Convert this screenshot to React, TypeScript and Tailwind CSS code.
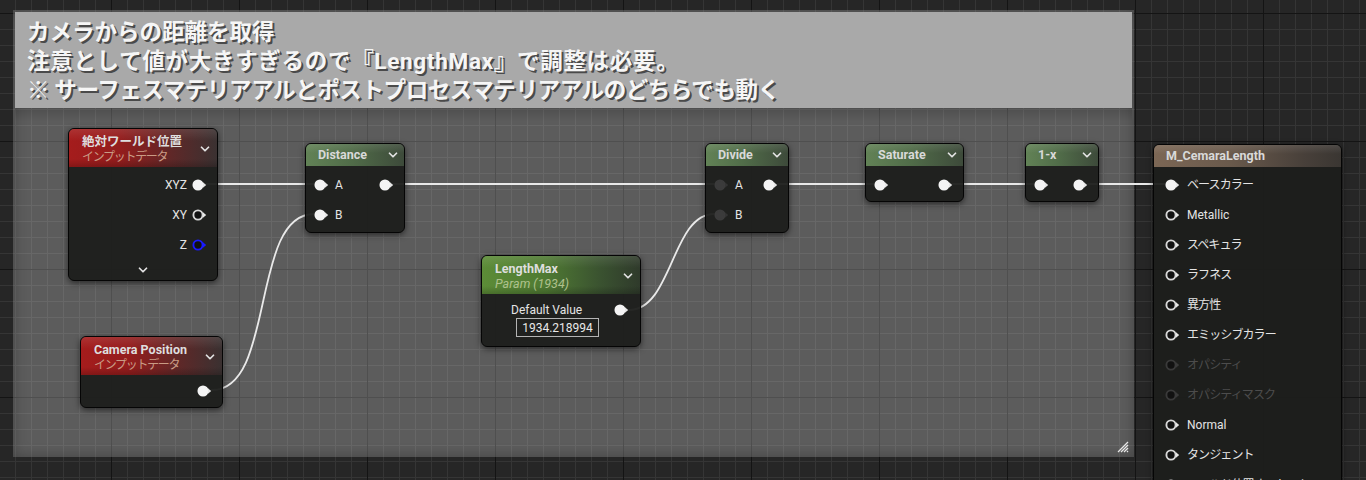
import React from 'react';
import { ChevronDown } from 'lucide-react';

type PinKind = 'filled' | 'ring' | 'dim' | 'blue' | 'ghost';

// Graph pin: a round socket with a little arrow on its right side
function Pin({ kind = 'filled' }: { kind?: PinKind }) {
  const fill = kind === 'filled' ? '#f4f4f4' : kind === 'dim' ? '#3b3b3b' : '#111111';
  const stroke =
    kind === 'filled' ? '#f4f4f4'
    : kind === 'blue' ? '#1a1aff'
    : kind === 'dim' ? '#3b3b3b'
    : kind === 'ghost' ? '#3a3a3a'
    : '#d8d8d8';
  const arrow =
    kind === 'blue' ? '#1a1aff'
    : kind === 'dim' ? '#333333'
    : kind === 'ghost' ? '#3a3a3a'
    : '#e6e6e6';
  return (
    <svg width="15" height="12" viewBox="0 0 15 12" className="shrink-0 block">
      <circle cx="6" cy="6" r="4.6" fill={fill} stroke={stroke} strokeWidth="1.9" />
      <path d="M11 3.3 L14.2 6 L11 8.7 Z" fill={arrow} />
    </svg>
  );
}

function Chevron() {
  return <ChevronDown size={14} strokeWidth={3} className="text-[#e2e2e2] shrink-0" />;
}

const RED = 'bg-[linear-gradient(90deg,#a51c1c_0%,#931d1d_35%,#5e2828_70%,#3a3131_100%)]';
const GREEN = 'bg-[linear-gradient(90deg,#628256_0%,#516d49_45%,#3d4a3a_100%)]';
const PARAM = 'bg-[linear-gradient(90deg,#5c8c37_0%,#4f7a33_40%,#3a5230_75%,#2f3a2b_100%)]';
const MATERIAL = 'bg-[linear-gradient(90deg,#7c6755_0%,#6a5a4c_40%,#48403a_80%,#3a3632_100%)]';

function Shell({ pos, children }: { pos: string; children: React.ReactNode }) {
  return (
    <div
      className={`absolute ${pos} rounded-[6px] border border-[#050505] bg-[#1c1d1b]/95 shadow-[0_2px_6px_rgba(0,0,0,0.55)] overflow-hidden`}
    >
      {children}
    </div>
  );
}

function ShortHeader({ tone, title, menu = true }: { tone: string; title: string; menu?: boolean }) {
  return (
    <div className={`relative h-[22px] ${tone} flex items-center justify-between pl-[12px] pr-[4px]`}>
      <div className="absolute inset-x-0 top-0 h-[9px] bg-gradient-to-b from-white/10 to-transparent" />
      <span className="relative text-[12.5px] font-bold leading-none text-[#d9d9d9]">{title}</span>
      {menu && <span className="relative"><Chevron /></span>}
    </div>
  );
}

function TallHeader({ tone, title, sub, subClass }: { tone: string; title: string; sub: string; subClass: string }) {
  return (
    <div className={`relative h-[38px] ${tone} flex items-center justify-between pl-[13px] pr-[5px]`}>
      <div className="absolute inset-x-0 top-0 h-[12px] bg-gradient-to-b from-white/10 to-transparent" />
      <div className="absolute inset-x-0 bottom-0 h-[8px] bg-gradient-to-t from-black/20 to-transparent" />
      <div className="relative flex flex-col pt-[2px]">
        <span className="text-[12.5px] font-bold leading-[15px] text-[#dedede]">{title}</span>
        <span className={`leading-[16px] ${subClass}`}>{sub}</span>
      </div>
      <span className="relative mt-[2px]"><Chevron /></span>
    </div>
  );
}

function GridBackdrop() {
  return (
    <svg className="absolute inset-0" width="1366" height="480">
      <defs>
        <pattern id="minor" x="15" y="13" width="16" height="16" patternUnits="userSpaceOnUse">
          <path d="M0 0.5 H16 M0.5 0 V16" stroke="#353535" strokeWidth="1" />
        </pattern>
        <pattern id="major" x="111" y="13" width="128" height="128" patternUnits="userSpaceOnUse">
          <path d="M0 0.5 H128 M0.5 0 V128" stroke="#141414" strokeWidth="1" />
        </pattern>
      </defs>
      <rect width="1366" height="480" fill="url(#minor)" />
      <rect width="1366" height="480" fill="url(#major)" />
    </svg>
  );
}

function Wires() {
  const c = '#e9e9e9';
  return (
    <svg className="absolute inset-0 pointer-events-none" width="1366" height="480">
      <g fill="none" stroke={c} strokeWidth="1.8" strokeLinecap="round">
        <path d="M206 184 H314" />
        <path d="M393 184 H714" />
        <path d="M778 184 H874" />
        <path d="M952 184 H1034" />
        <path d="M1088 184 H1165" />
        <path d="M212 390 C276 390 250 214 314 214" />
        <path d="M629 310 C672 310 672 214 714 214" />
      </g>
    </svg>
  );
}

function CommentBox() {
  return (
    <div className="absolute left-[13px] top-[10px] w-[1121px] h-[447px] bg-white/25 p-[2px] shadow-[inset_0_0_14px_rgba(0,0,0,0.28)]">
      <div className="h-[96px] bg-[#a9a9a9] pl-[12px] pt-[6px] text-[22.5px] font-bold leading-[29px] text-[#f6f6f6] [text-shadow:2px_2px_0_#4a4a4a]">
        <div>カメラからの距離を取得</div>
        <div className="tracking-[0.7px]">注意として値が大きすぎるので『LengthMax』で調整は必要。</div>
        <div className="tracking-[-0.4px]">※ サーフェスマテリアアルとポストプロセスマテリアアルのどちらでも動く</div>
      </div>
      <div className="h-[14px] bg-gradient-to-b from-black/15 to-transparent" />
      <svg className="absolute right-[5px] bottom-[4px]" width="12" height="12" viewBox="0 0 12 12">
        <g stroke="#e8e8e8" strokeWidth="1.2">
          <path d="M1 11 L11 1" />
          <path d="M4 11 L11 4" />
          <path d="M7 11 L11 7" />
          <path d="M10 11 L11 10" />
        </g>
      </svg>
    </div>
  );
}

const materialRows: { label: string; kind: PinKind; jp?: boolean }[] = [
  { label: 'ベースカラー', kind: 'filled', jp: true },
  { label: 'Metallic', kind: 'ring' },
  { label: 'スペキュラ', kind: 'ring', jp: true },
  { label: 'ラフネス', kind: 'ring', jp: true },
  { label: '異方性', kind: 'ring', jp: true },
  { label: 'エミッシブカラー', kind: 'ring', jp: true },
  { label: 'オパシティ', kind: 'ghost', jp: true },
  { label: 'オパシティマスク', kind: 'ghost', jp: true },
  { label: 'Normal', kind: 'ring' },
  { label: 'タンジェント', kind: 'ring', jp: true },
  { label: 'ワールド位置オフセット', kind: 'ring', jp: true },
];

const inputData = 'text-[12px] tracking-[-1.3px] text-[#c99b85]';

export default function App() {
  return (
    <div className="relative w-[1366px] h-[480px] overflow-hidden bg-[#262626] font-['Roboto','Noto_Sans_CJK_JP',sans-serif] text-[12px] text-[#e4e4e4]">
      <GridBackdrop />
      <CommentBox />
      <Wires />

      {/* Absolute World Position */}
      <Shell pos="left-[68px] top-[128px] w-[150px] h-[153px]">
        <TallHeader tone={RED} title="絶対ワールド位置" sub="インプットデータ" subClass={inputData} />
        <div className="flex flex-col pt-[3px]">
          {[
            { l: 'XYZ', k: 'filled' as PinKind },
            { l: 'XY', k: 'ring' as PinKind },
            { l: 'Z', k: 'blue' as PinKind },
          ].map((r) => (
            <div key={r.l} className="h-[30px] flex items-center justify-end gap-[5px] pr-[10px]">
              <span className="leading-none">{r.l}</span>
              <Pin kind={r.k} />
            </div>
          ))}
          <div className="flex justify-center pt-[3px]">
            <Chevron />
          </div>
        </div>
      </Shell>

      {/* Camera Position */}
      <Shell pos="left-[80px] top-[336px] w-[143px] h-[72px]">
        <TallHeader tone={RED} title="Camera Position" sub="インプットデータ" subClass={inputData} />
        <div className="h-[30px] mt-[1px] flex items-center justify-end pr-[10px]">
          <Pin />
        </div>
      </Shell>

      {/* Distance */}
      <Shell pos="left-[305px] top-[143px] w-[100px] h-[90px]">
        <ShortHeader tone={GREEN} title="Distance" />
        <div className="flex flex-col pt-[4px]">
          <div className="h-[30px] flex items-center pl-[8px] pr-[10px]">
            <Pin />
            <span className="ml-[6px] leading-none">A</span>
            <span className="ml-auto"><Pin /></span>
          </div>
          <div className="h-[30px] flex items-center pl-[8px]">
            <Pin />
            <span className="ml-[6px] leading-none">B</span>
          </div>
        </div>
      </Shell>

      {/* LengthMax parameter */}
      <Shell pos="left-[481px] top-[255px] w-[160px] h-[92px]">
        <TallHeader tone={PARAM} title="LengthMax" sub="Param (1934)" subClass="text-[12.5px] italic text-[#afc18d]" />
        <div className="flex flex-col pt-[8px]">
          <div className="h-[16px] flex items-center pl-[29px] pr-[11px]">
            <span className="leading-none">Default Value</span>
            <span className="ml-auto"><Pin /></span>
          </div>
          <div className="pl-[34px]">
            <div className="w-[83px] h-[19px] border border-[#b4b4b4] flex items-center justify-center leading-none text-[#e8e8e8]">
              1934.218994
            </div>
          </div>
        </div>
      </Shell>

      {/* Divide */}
      <Shell pos="left-[705px] top-[143px] w-[84px] h-[90px]">
        <ShortHeader tone={GREEN} title="Divide" />
        <div className="flex flex-col pt-[4px]">
          <div className="h-[30px] flex items-center pl-[8px] pr-[10px]">
            <Pin kind="dim" />
            <span className="ml-[6px] leading-none">A</span>
            <span className="ml-auto"><Pin /></span>
          </div>
          <div className="h-[30px] flex items-center pl-[8px]">
            <Pin kind="dim" />
            <span className="ml-[6px] leading-none">B</span>
          </div>
        </div>
      </Shell>

      {/* Saturate */}
      <Shell pos="left-[865px] top-[143px] w-[99px] h-[59px]">
        <ShortHeader tone={GREEN} title="Saturate" />
        <div className="h-[30px] mt-[4px] flex items-center justify-between pl-[8px] pr-[10px]">
          <Pin />
          <Pin />
        </div>
      </Shell>

      {/* One minus */}
      <Shell pos="left-[1025px] top-[143px] w-[74px] h-[59px]">
        <ShortHeader tone={GREEN} title="1-x" />
        <div className="h-[30px] mt-[4px] flex items-center justify-between pl-[8px] pr-[10px]">
          <Pin />
          <Pin />
        </div>
      </Shell>

      {/* Material output */}
      <Shell pos="left-[1153px] top-[144px] w-[189px] h-[360px]">
        <ShortHeader tone={MATERIAL} title="M_CemaraLength" menu={false} />
        <div className="flex flex-col pt-[3px]">
          {materialRows.map((r) => (
            <div key={r.label} className="h-[30px] flex items-center pl-[11px] gap-[7px]">
              <Pin kind={r.kind} />
              <span
                className={`leading-none ${r.jp ? 'tracking-[-0.9px]' : ''} ${r.kind === 'ghost' ? 'text-[#4c4c4c]' : 'text-[#e4e4e4]'}`}
              >
                {r.label}
              </span>
            </div>
          ))}
        </div>
      </Shell>
    </div>
  );
}
